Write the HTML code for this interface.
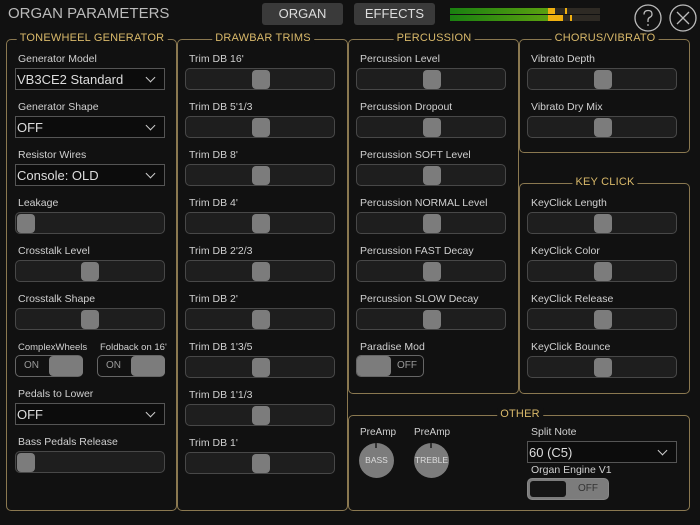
<!DOCTYPE html><html><head><meta charset="utf-8"><style>
*{box-sizing:border-box;margin:0;padding:0}
body{width:700px;height:525px;background:#111;font-family:"Liberation Sans",sans-serif;color:#ccc;position:relative;overflow:hidden}
div,span,svg{position:absolute}
.p{border:1.5px solid #8a7850;border-radius:5px}
.t{color:#d9b96a;font-size:11px;background:#111;padding:0 3px;top:-8px;white-space:nowrap;transform:translateX(-50%);letter-spacing:0.2px}
.l{font-size:10.5px;color:#d0d0d0;white-space:nowrap}
.tr{width:150px;height:22px;background:#1e1e1e;border:1px solid #484848;border-radius:5px}
.k{width:18px;height:19px;top:1px;background:#7c7c7c;border-radius:4px}
.dd{width:150px;height:22px;background:#0c0c0c;border:1px solid #555;font-size:13px;color:#ddd;padding:3px 0 0 1px}
.dd:after{content:"";position:absolute;right:10px;top:5px;width:6px;height:6px;border-right:1.5px solid #ccc;border-bottom:1.5px solid #ccc;transform:rotate(45deg)}
.tg{height:22px;border:1px solid #666;border-radius:5px;background:#111;font-size:10px;color:#999}
.btn{height:22px;width:81px;background:#3a3a3a;border-radius:3px;color:#ddd;font-size:13px;text-align:center;line-height:22px}
.kn{width:35px;height:35px;border-radius:50%;background:#7c7c7c;font-size:8.5px;color:#ddd;text-align:center;line-height:35px}
.kn:before{content:"";position:absolute;left:16px;top:0;width:2px;height:5px;background:#333}
</style></head><body>
<div style="left:8px;top:5px;font-size:15px;color:#bbb">ORGAN PARAMETERS</div>
<div class="btn" style="left:262px;top:3px">ORGAN</div>
<div class="btn" style="left:354px;top:3px">EFFECTS</div>
<div style="left:450px;top:8px;width:150px;height:6px;background:#2e2a24"><span style="left:0;top:0;width:98px;height:6px;background:linear-gradient(90deg,#1a8010,#5aa010)"></span><span style="left:98px;top:0;width:7px;height:6px;background:#f0b010"></span><span style="left:115px;top:0;width:2px;height:6px;background:#f0b010"></span></div>
<div style="left:450px;top:15px;width:150px;height:6px;background:#2e2a24"><span style="left:0;top:0;width:98px;height:6px;background:linear-gradient(90deg,#1a8010,#5aa010)"></span><span style="left:98px;top:0;width:15px;height:6px;background:#f0b010"></span><span style="left:120px;top:0;width:2px;height:6px;background:#f0b010"></span></div>
<svg style="left:633px;top:3px" width="30" height="30" viewBox="0 0 30 30"><circle cx="15" cy="15" r="13" fill="none" stroke="#bbb" stroke-width="1.3"/><path d="M11 11.5 Q11 7.5 15 7.5 Q19 7.5 19 11 Q19 13.5 16.5 14.5 Q15 15.3 15 17.5 V19" fill="none" stroke="#bbb" stroke-width="1.3"/><circle cx="15" cy="22" r="0.9" fill="#bbb"/></svg>
<svg style="left:668px;top:3px" width="30" height="30" viewBox="0 0 30 30"><circle cx="15" cy="15" r="13" fill="none" stroke="#bbb" stroke-width="1.3"/><path d="M9 9 L21 21 M21 9 L9 21" stroke="#bbb" stroke-width="1.3"/></svg>

<div class="p" style="left:6px;top:39px;width:171px;height:472px"><span class="t" style="left:85px">TONEWHEEL GENERATOR</span></div>
<div class="p" style="left:177px;top:39px;width:171px;height:472px"><span class="t" style="left:85px">DRAWBAR TRIMS</span></div>
<div class="p" style="left:348px;top:39px;width:171px;height:355px"><span class="t" style="left:85px">PERCUSSION</span></div>
<div class="p" style="left:519px;top:39px;width:171px;height:114px"><span class="t" style="left:85px">CHORUS/VIBRATO</span></div>
<div class="p" style="left:519px;top:183px;width:171px;height:211px"><span class="t" style="left:85px">KEY CLICK</span></div>
<div class="p" style="left:348px;top:415px;width:342px;height:96px"><span class="t" style="left:171px">OTHER</span></div>

<div class="l" style="left:18px;top:53px">Generator Model</div><div class="dd" style="left:15px;top:68px">VB3CE2 Standard</div>
<div class="l" style="left:18px;top:101px">Generator Shape</div><div class="dd" style="left:15px;top:116px">OFF</div>
<div class="l" style="left:18px;top:149px">Resistor Wires</div><div class="dd" style="left:15px;top:164px">Console: OLD</div>
<div class="l" style="left:18px;top:197px">Leakage</div><div class="tr" style="left:15px;top:212px"><span class="k" style="left:1px"></span></div>
<div class="l" style="left:18px;top:245px">Crosstalk Level</div><div class="tr" style="left:15px;top:260px"><span class="k" style="left:65px"></span></div>
<div class="l" style="left:18px;top:293px">Crosstalk Shape</div><div class="tr" style="left:15px;top:308px"><span class="k" style="left:65px"></span></div>
<div class="l" style="left:18px;top:342px;font-size:9.5px">ComplexWheels</div>
<div class="tg" style="left:15px;top:355px;width:68px"><span style="left:8px;top:4px">ON</span><span style="left:33px;top:0;width:34px;height:20px;background:#7c7c7c;border-radius:4px"></span></div>
<div class="l" style="left:100px;top:342px;font-size:9.5px">Foldback on 16'</div>
<div class="tg" style="left:97px;top:355px;width:68px"><span style="left:8px;top:4px">ON</span><span style="left:33px;top:0;width:34px;height:20px;background:#7c7c7c;border-radius:4px"></span></div>
<div class="l" style="left:18px;top:388px">Pedals to Lower</div><div class="dd" style="left:15px;top:403px">OFF</div>
<div class="l" style="left:18px;top:436px">Bass Pedals Release</div><div class="tr" style="left:15px;top:451px"><span class="k" style="left:1px"></span></div>

<div class="l" style="left:189px;top:53px">Trim DB 16'</div><div class="tr" style="left:185px;top:68px"><span class="k" style="left:66px"></span></div>
<div class="l" style="left:189px;top:101px">Trim DB 5'1/3</div><div class="tr" style="left:185px;top:116px"><span class="k" style="left:66px"></span></div>
<div class="l" style="left:189px;top:149px">Trim DB 8'</div><div class="tr" style="left:185px;top:164px"><span class="k" style="left:66px"></span></div>
<div class="l" style="left:189px;top:197px">Trim DB 4'</div><div class="tr" style="left:185px;top:212px"><span class="k" style="left:66px"></span></div>
<div class="l" style="left:189px;top:245px">Trim DB 2'2/3</div><div class="tr" style="left:185px;top:260px"><span class="k" style="left:66px"></span></div>
<div class="l" style="left:189px;top:293px">Trim DB 2'</div><div class="tr" style="left:185px;top:308px"><span class="k" style="left:66px"></span></div>
<div class="l" style="left:189px;top:341px">Trim DB 1'3/5</div><div class="tr" style="left:185px;top:356px"><span class="k" style="left:66px"></span></div>
<div class="l" style="left:189px;top:389px">Trim DB 1'1/3</div><div class="tr" style="left:185px;top:404px"><span class="k" style="left:66px"></span></div>
<div class="l" style="left:189px;top:437px">Trim DB 1'</div><div class="tr" style="left:185px;top:452px"><span class="k" style="left:66px"></span></div>

<div class="l" style="left:360px;top:53px">Percussion Level</div><div class="tr" style="left:356px;top:68px"><span class="k" style="left:66px"></span></div>
<div class="l" style="left:360px;top:101px">Percussion Dropout</div><div class="tr" style="left:356px;top:116px"><span class="k" style="left:66px"></span></div>
<div class="l" style="left:360px;top:149px">Percussion SOFT Level</div><div class="tr" style="left:356px;top:164px"><span class="k" style="left:66px"></span></div>
<div class="l" style="left:360px;top:197px">Percussion NORMAL Level</div><div class="tr" style="left:356px;top:212px"><span class="k" style="left:66px"></span></div>
<div class="l" style="left:360px;top:245px">Percussion FAST Decay</div><div class="tr" style="left:356px;top:260px"><span class="k" style="left:66px"></span></div>
<div class="l" style="left:360px;top:293px">Percussion SLOW Decay</div><div class="tr" style="left:356px;top:308px"><span class="k" style="left:66px"></span></div>
<div class="l" style="left:360px;top:341px">Paradise Mod</div>
<div class="tg" style="left:356px;top:355px;width:68px"><span style="left:0;top:0;width:34px;height:20px;background:#7c7c7c;border-radius:4px"></span><span style="left:40px;top:4px">OFF</span></div>

<div class="l" style="left:531px;top:53px">Vibrato Depth</div><div class="tr" style="left:527px;top:68px"><span class="k" style="left:66px"></span></div>
<div class="l" style="left:531px;top:101px">Vibrato Dry Mix</div><div class="tr" style="left:527px;top:116px"><span class="k" style="left:66px"></span></div>

<div class="l" style="left:531px;top:197px">KeyClick Length</div><div class="tr" style="left:527px;top:212px"><span class="k" style="left:66px"></span></div>
<div class="l" style="left:531px;top:245px">KeyClick Color</div><div class="tr" style="left:527px;top:260px"><span class="k" style="left:66px"></span></div>
<div class="l" style="left:531px;top:293px">KeyClick Release</div><div class="tr" style="left:527px;top:308px"><span class="k" style="left:66px"></span></div>
<div class="l" style="left:531px;top:341px">KeyClick Bounce</div><div class="tr" style="left:527px;top:356px"><span class="k" style="left:66px"></span></div>

<div class="l" style="left:360px;top:427px;font-size:10px">PreAmp</div>
<div class="l" style="left:414px;top:427px;font-size:10px">PreAmp</div>
<div class="kn" style="left:359px;top:443px">BASS</div>
<div class="kn" style="left:414px;top:443px">TREBLE</div>
<div class="l" style="left:531px;top:426px">Split Note</div><div class="dd" style="left:527px;top:441px">60 (C5)</div>
<div class="l" style="left:531px;top:464px">Organ Engine V1</div>
<div class="tg" style="left:527px;top:478px;width:82px;background:#7c7c7c;border-color:#888;color:#333"><span style="left:2px;top:2px;width:36px;height:16px;background:#151515;border-radius:3px"></span><span style="left:50px;top:4px">OFF</span></div>
</body></html>
